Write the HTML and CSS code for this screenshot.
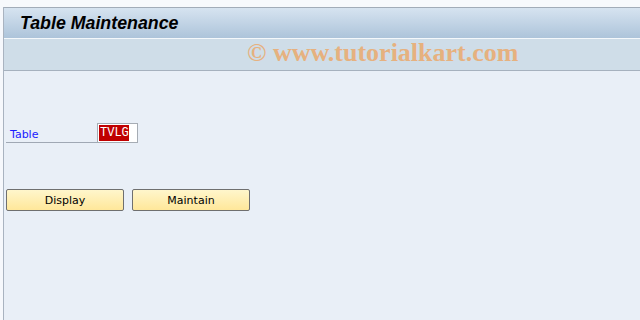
FILE: index.html
```html
<!DOCTYPE html>
<html lang="en">
<head>
  <meta charset="UTF-8" />
  <title>Table Maintenance</title>
  <link rel="stylesheet" href="styles.css">
</head>
<body>
  <div class="top-strip"></div>

  <div class="frame">
    <div class="title-bar">
      <h1>Table Maintenance</h1>
    </div>
    <div class="toolbar">
      <span class="watermark">© www.tutorialkart.com</span>
    </div>

    <main>
      <div class="field-row">
        <label class="field-label">Table</label>
        <div class="field-box"><span class="field-value">TVLG</span></div>
      </div>

      <div class="buttons">
        <button>Display</button>
        <button>Maintain</button>
      </div>
    </main>
  </div>
</body>
</html>
```

FILE: styles.css
```css
body {
  margin: 0;
  font-family: "DejaVu Sans", sans-serif;
  font-size: 11px;
  background-color: #f6f8fc;
  width: 640px;
  height: 320px;
  overflow: hidden;
}

.top-strip {
  height: 7px;
  background-color: #f7f9fc;
}

.frame {
  margin-left: 3px;
  height: 313px;
  background-color: #e9eff7;
  border-left: 1px solid #a9b3c0;
}

.title-bar {
  border-top: 1px solid #a2acb8;
  border-bottom: 1px solid #f4f8fb;
  background: linear-gradient(#d6e3f0, #adc4da);
  box-sizing: border-box;
  height: 32px;
  display: flex;
  align-items: center;
}

.title-bar h1 {
  margin: 0 0 0 16px;
  font-family: "Liberation Sans", sans-serif;
  font-size: 17.8px;
  font-weight: bold;
  font-style: italic;
  color: #000;
}

.toolbar {
  height: 32px;
  background-color: #cfdde8;
  border-bottom: 1px solid #a6b1be;
  box-sizing: border-box;
  padding-left: 243px;
}

.watermark {
  display: block;
  font-family: "Liberation Serif", serif;
  font-weight: bold;
  font-size: 26px;
  line-height: 28px;
  color: #e6b17f;
}

main {
  padding: 52px 0 0 2px;
}

.field-row {
  display: flex;
  align-items: flex-end;
  width: 132px;
}

.field-label {
  width: 91px;
  height: 19px;
  padding: 2px 0 0 4px;
  box-sizing: border-box;
  color: #1a1aff;
  border-bottom: 1px solid #a0a8b4;
  line-height: 17px;
}

.field-box {
  width: 41px;
  height: 20px;
  box-sizing: border-box;
  background-color: #fff;
  border: 1px solid #a6acb4;
  padding: 1px 0 0 1px;
}

.field-value {
  display: inline-block;
  background-color: #c00000;
  color: #fff;
  font-family: "Liberation Mono", monospace;
  font-size: 12px;
  line-height: 16px;
  padding: 0 1px;
  width: 30px;
  height: 16px;
  box-sizing: border-box;
  overflow: hidden;
}

.buttons {
  display: flex;
  gap: 8px;
  margin-top: 46px;
}

.buttons button {
  width: 118px;
  height: 22px;
  font-family: "DejaVu Sans", sans-serif;
  font-size: 11px;
  color: #000;
  background: linear-gradient(#fff6cc, #ffe79a);
  border: 1px solid #6f6f6f;
  border-radius: 2px;
  padding: 0;
}
```
